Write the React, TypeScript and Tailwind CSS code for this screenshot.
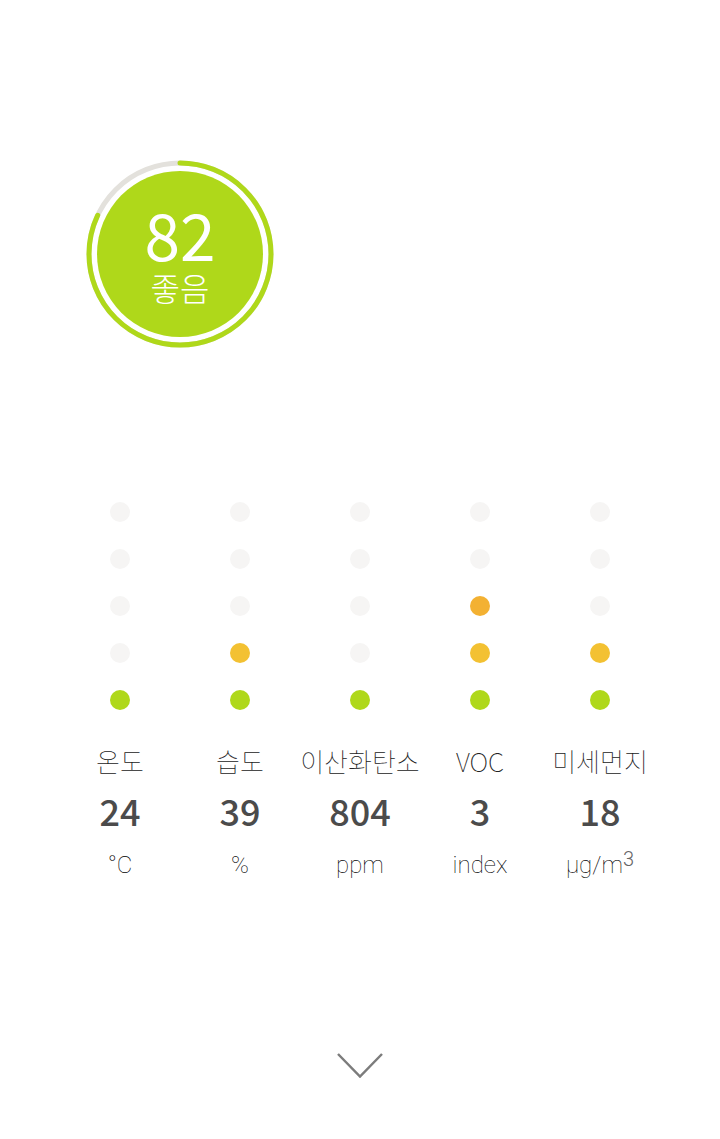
type Metric = {
  label: string;
  value: string;
  unit: string;
  sup?: string;
  level: number;
};

const METRICS: Metric[] = [
  { label: "온도", value: "24", unit: "°C", level: 1 },
  { label: "습도", value: "39", unit: "%", level: 2 },
  { label: "이산화탄소", value: "804", unit: "ppm", level: 1 },
  { label: "VOC", value: "3", unit: "index", level: 3 },
  { label: "미세먼지", value: "18", unit: "µg/m", sup: "3", level: 2 },
];

// bottom to top
const LEVEL_COLORS = [
  "bg-[#afd81a]",
  "bg-[#f3c132]",
  "bg-[#f3b132]",
  "bg-[#f08c32]",
  "bg-[#e64b32]",
];

const SCORE = 82;

const ScoreRing = ({ score, label }: { score: number; label: string }) => (
  <div className="relative h-[188px] w-[188px]">
    <svg viewBox="0 0 188 188" className="h-full w-full" aria-hidden>
      <circle cx="94" cy="94" r="91" fill="none" stroke="#e3e1dc" strokeWidth="5" />
      <circle
        cx="94"
        cy="94"
        r="91"
        fill="none"
        stroke="#afd81a"
        strokeWidth="5"
        strokeLinecap="round"
        pathLength="100"
        strokeDasharray={`${score} 100`}
        transform="rotate(-90 94 94)"
      />
      <circle cx="94" cy="94" r="83" fill="#afd81a" />
    </svg>
    <div className="absolute inset-0 flex flex-col items-center pt-10 text-white">
      <span className="text-[64px] leading-[66px]">{score}</span>
      <span className="text-[32px] leading-[42px] font-light">{label}</span>
    </div>
  </div>
);

const Dots = ({ level }: { level: number }) => (
  <div className="flex flex-col-reverse gap-[27px]">
    {LEVEL_COLORS.map((color, i) => (
      <span
        key={color}
        className={`h-5 w-5 rounded-full ${i < level ? color : "bg-[#f6f5f4]"}`}
      />
    ))}
  </div>
);

const MetricColumn = ({ metric }: { metric: Metric }) => (
  <li className="flex min-w-0 flex-1 flex-col items-center">
    <Dots level={metric.level} />
    <span className="mt-8 text-[26px] leading-[38px] font-thin whitespace-nowrap text-[#222]">
      {metric.label}
    </span>
    <span className="mt-2 text-4xl leading-[44px] font-medium text-[#4b4b4b]">
      {metric.value}
    </span>
    <span className="mt-[17px] flex font-[Roboto,sans-serif] text-2xl leading-8 font-thin text-black">
      {metric.unit}
      {metric.sup && (
        <sup className="top-0 text-xl leading-5 font-light text-[#666]">{metric.sup}</sup>
      )}
    </span>
  </li>
);

export default function App() {
  return (
    <main className="min-h-screen bg-white px-[60px] pt-40 pb-[60px] font-['Noto_Sans_CJK_KR',sans-serif]">
      <div className="px-[26px]">
        <ScoreRing score={SCORE} label="좋음" />
      </div>
      <ul className="mt-[154px] flex">
        {METRICS.map((metric) => (
          <MetricColumn key={metric.label} metric={metric} />
        ))}
      </ul>
      <div className="mt-[171px] flex justify-center">
        <button type="button" aria-label="더 보기">
          <svg width="48" height="26" viewBox="0 0 48 26" fill="none" stroke="#7c7c7c" strokeWidth="2.5">
            <path d="M2 2 L24 24.5 L46 2" />
          </svg>
        </button>
      </div>
    </main>
  );
}
